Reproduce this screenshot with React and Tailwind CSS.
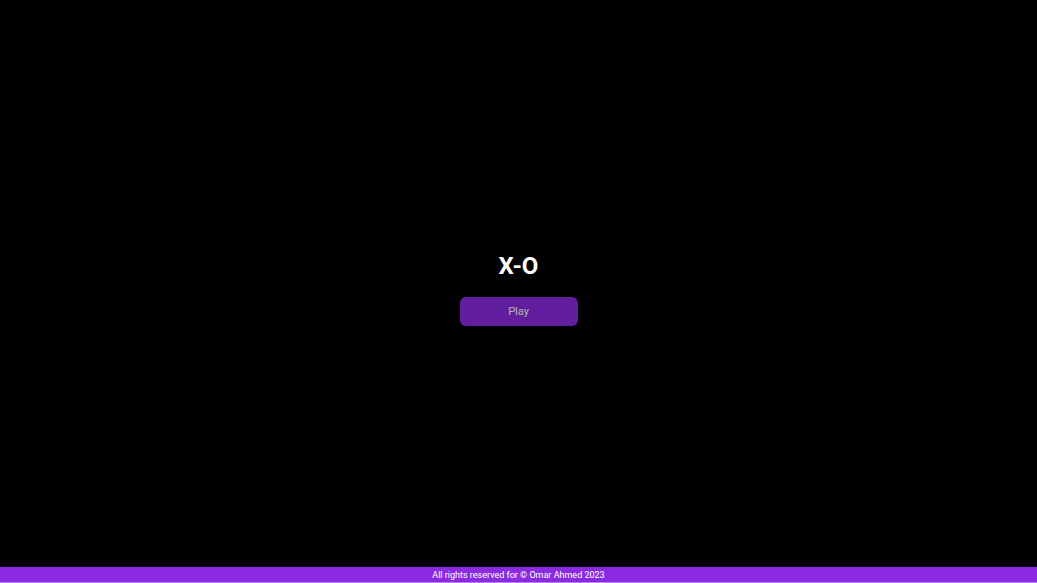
export default function App() {
  return (
    <div className="flex min-h-screen flex-col bg-black font-['Roboto',sans-serif] text-white">
      <main className="flex grow flex-col items-center justify-center gap-4 pt-2.5">
        <h1 className="text-2xl leading-[30px] font-bold">X-O</h1>
        <button
          type="button"
          disabled
          className="flex h-[29px] w-[118px] items-center justify-center rounded-md bg-[#8a2be2] text-[11px] leading-4 text-white opacity-70"
        >
          Play
        </button>
      </main>
      <footer className="border-b border-[#b980ee] bg-[#8a2be2] pt-px text-center text-[9px] leading-[14px]">
        All rights reserved for © Omar Ahmed 2023
      </footer>
    </div>
  );
}
